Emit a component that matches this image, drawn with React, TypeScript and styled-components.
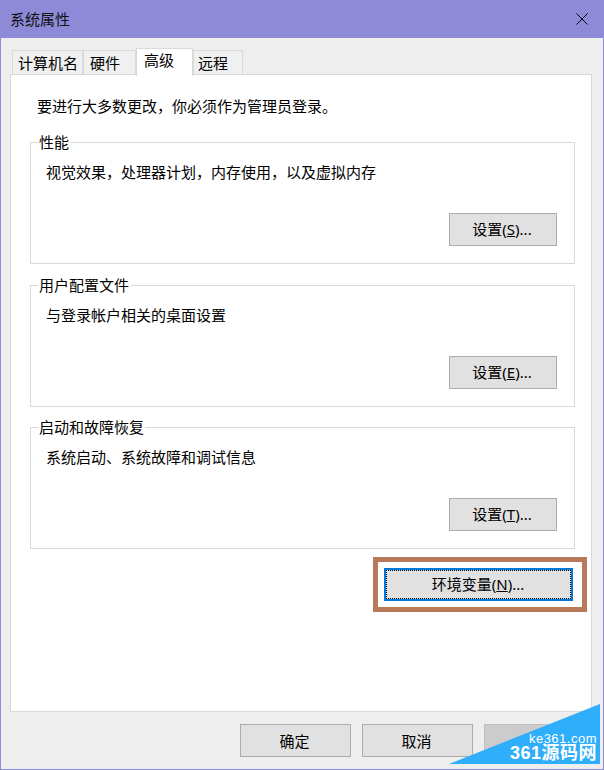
import styled, { createGlobalStyle } from 'styled-components';

const UI_FONT = `"Noto Sans", "Noto Sans CJK SC", sans-serif`;

const tabs = [
  { label: '计算机名', width: 71, inset: 5 },
  { label: '硬件', width: 53, inset: 6 },
  { label: '高级', width: 57, inset: 7, active: true },
  { label: '远程', width: 50, inset: 4 },
];

const groups = [
  { title: '性能', text: '视觉效果，处理器计划，内存使用，以及虚拟内存', key: 'S' },
  { title: '用户配置文件', text: '与登录帐户相关的桌面设置', key: 'E' },
  { title: '启动和故障恢复', text: '系统启动、系统故障和调试信息', key: 'T' },
];

function App() {
  return (
    <>
      <GlobalStyle />
      <Window>
        <TitleBar>
          <WindowTitle>系统属性</WindowTitle>
          <CloseIcon width="12" height="12" viewBox="0 0 12 12">
            <path d="M0.5 0.5L11.5 11.5M11.5 0.5L0.5 11.5" stroke="#000" strokeWidth="1" fill="none" />
          </CloseIcon>
        </TitleBar>
        <Client>
          <TabList>
            {tabs.map((tab) => (
              <Tab key={tab.label} $width={tab.width} $inset={tab.inset} $active={tab.active}>
                {tab.label}
              </Tab>
            ))}
          </TabList>
          <Panel>
            <Intro>要进行大多数更改，你必须作为管理员登录。</Intro>
            <Groups>
              {groups.map((group) => (
                <GroupBox key={group.key}>
                  <GroupTitle>{group.title}</GroupTitle>
                  <GroupText>{group.text}</GroupText>
                  <GroupActions>
                    <SettingsButton>
                      设置(<u>{group.key}</u>)...
                    </SettingsButton>
                  </GroupActions>
                </GroupBox>
              ))}
            </Groups>
            <EnvRow>
              <Highlight>
                <EnvButton>
                  <EnvFocus>
                    环境变量(<u>N</u>)...
                  </EnvFocus>
                </EnvButton>
              </Highlight>
            </EnvRow>
          </Panel>
          <Footer>
            <DialogButton>确定</DialogButton>
            <DialogButton>取消</DialogButton>
            <DialogButton disabled>应用</DialogButton>
          </Footer>
        </Client>
        <Watermark>
          <WatermarkUrl>ke361.com</WatermarkUrl>
          <WatermarkName>361源码网</WatermarkName>
        </Watermark>
      </Window>
    </>
  );
}

export default App;

const GlobalStyle = createGlobalStyle`
  html, body {
    margin: 0;
    padding: 0;
    background: #eeeeee;
  }

  * {
    box-sizing: border-box;
  }
`;

const Window = styled.div`
  position: relative;
  display: flex;
  flex-direction: column;
  width: 604px;
  height: 770px;
  overflow: hidden;
  border: 1px solid #8e8ad8;
  border-top: 0;
  background: #eeeeee;
  color: #000;
  font-family: ${UI_FONT};
  font-size: 15px;
`;

const TitleBar = styled.div`
  display: flex;
  align-items: center;
  justify-content: space-between;
  flex: 0 0 38px;
  margin: 0 -1px;
  padding: 0 16px 0 10px;
  background: #8e8ad8;
`;

const WindowTitle = styled.span`
  font-size: 15px;
  line-height: 20px;
  color: #111;
`;

const CloseIcon = styled.svg`
  display: block;
`;

const Client = styled.div`
  display: flex;
  flex: 1;
  flex-direction: column;
  padding: 10px 11px 0 9px;
`;

const TabList = styled.div`
  display: flex;
  align-items: flex-end;
  height: 27px;
  margin-bottom: -1px;
  padding-left: 2px;
`;

const Tab = styled.div<{ $width: number; $inset: number; $active?: boolean }>`
  position: relative;
  z-index: ${(p) => (p.$active ? 1 : 0)};
  width: ${(p) => p.$width}px;
  height: ${(p) => (p.$active ? 28 : 25)}px;
  margin-bottom: ${(p) => (p.$active ? -1 : 0)}px;
  padding-top: ${(p) => (p.$active ? 0 : 1)}px;
  padding-left: ${(p) => p.$inset}px;
  border: 1px solid #d9d9d9;
  border-bottom: ${(p) => (p.$active ? 0 : 1)}px solid #d9d9d9;
  background: ${(p) => (p.$active ? '#fff' : '#f0f0f0')};
  font-size: 15px;
  line-height: 22px;
`;

const Panel = styled.div`
  display: flex;
  flex-direction: column;
  height: 638px;
  padding: 0 0 0 19px;
  border: 1px solid #d9d9d9;
  background: #fff;
`;

const Intro = styled.p`
  height: 20px;
  margin: 21px 0 0 7px;
  line-height: 20px;
`;

const Groups = styled.div`
  display: flex;
  flex-direction: column;
  gap: 11px;
  width: 545px;
  margin-top: 16px;
`;

const GroupBox = styled.fieldset`
  height: 132px;
  margin: 0;
  padding: 0 17px 0 15px;
  border: 1px solid #d9d9d9;
  min-inline-size: 0;

  &:last-child {
    margin-top: -1px;
  }
`;

const GroupTitle = styled.legend`
  height: 20px;
  margin-left: -8px;
  padding: 0 1px;
  line-height: 20px;
`;

const GroupText = styled.p`
  height: 20px;
  margin: 10px 0 0;
  line-height: 20px;
`;

const GroupActions = styled.div`
  display: flex;
  justify-content: flex-end;
  margin-top: 31px;
`;

const SettingsButton = styled.button`
  width: 108px;
  height: 33px;
  padding: 0 2px 2px 0;
  border: 1px solid #adadad;
  background: #e1e1e1;
  color: #000;
  font-family: ${UI_FONT};
  font-size: 15px;
`;

const EnvRow = styled.div`
  display: flex;
  justify-content: flex-end;
  margin-top: 8px;
  padding-right: 4px;
`;

const Highlight = styled.div`
  padding: 6px 9px 6px 6px;
  border: 5px solid #b87a5a;
  background: #fff;
`;

const EnvButton = styled.button`
  display: block;
  width: 189px;
  height: 33px;
  padding: 0;
  border: 2px solid #0078d7;
  background: #e1e1e1;
  color: #000;
  font-family: ${UI_FONT};
  font-size: 15px;
`;

const EnvFocus = styled.span`
  display: flex;
  align-items: center;
  justify-content: center;
  height: 100%;
  padding: 0 1px 2px 0;
  border: 1px dotted #000;
`;

const Footer = styled.div`
  display: flex;
  justify-content: flex-end;
  gap: 11px;
  margin-top: 12px;
  margin-right: -3px;
`;

const DialogButton = styled.button`
  width: 111px;
  height: 33px;
  padding: 0 2px 0 0;
  border: 1px solid ${(p) => (p.disabled ? '#bfbfbf' : '#adadad')};
  background: ${(p) => (p.disabled ? '#cccccc' : '#e1e1e1')};
  color: ${(p) => (p.disabled ? '#838383' : '#000')};
  font-family: ${UI_FONT};
  font-size: 15px;
`;

const Watermark = styled.div`
  position: absolute;
  right: 3px;
  bottom: 5px;
  display: flex;
  flex-direction: column;
  align-items: flex-end;
  justify-content: flex-end;
  width: 151px;
  height: 60px;
  padding: 0 3px 3px 0;
  background: #2eaefb;
  clip-path: polygon(0 100%, 100% 0, 100% 100%);
  color: #fff;
`;

const WatermarkUrl = styled.span`
  font-family: "Liberation Sans", sans-serif;
  font-size: 13px;
  line-height: 13px;
  letter-spacing: 0.5px;
`;

const WatermarkName = styled.span`
  font-family: "Liberation Sans", "Noto Sans CJK SC", sans-serif;
  font-size: 18px;
  font-weight: 700;
  line-height: 16px;
  letter-spacing: 0.5px;
`;
